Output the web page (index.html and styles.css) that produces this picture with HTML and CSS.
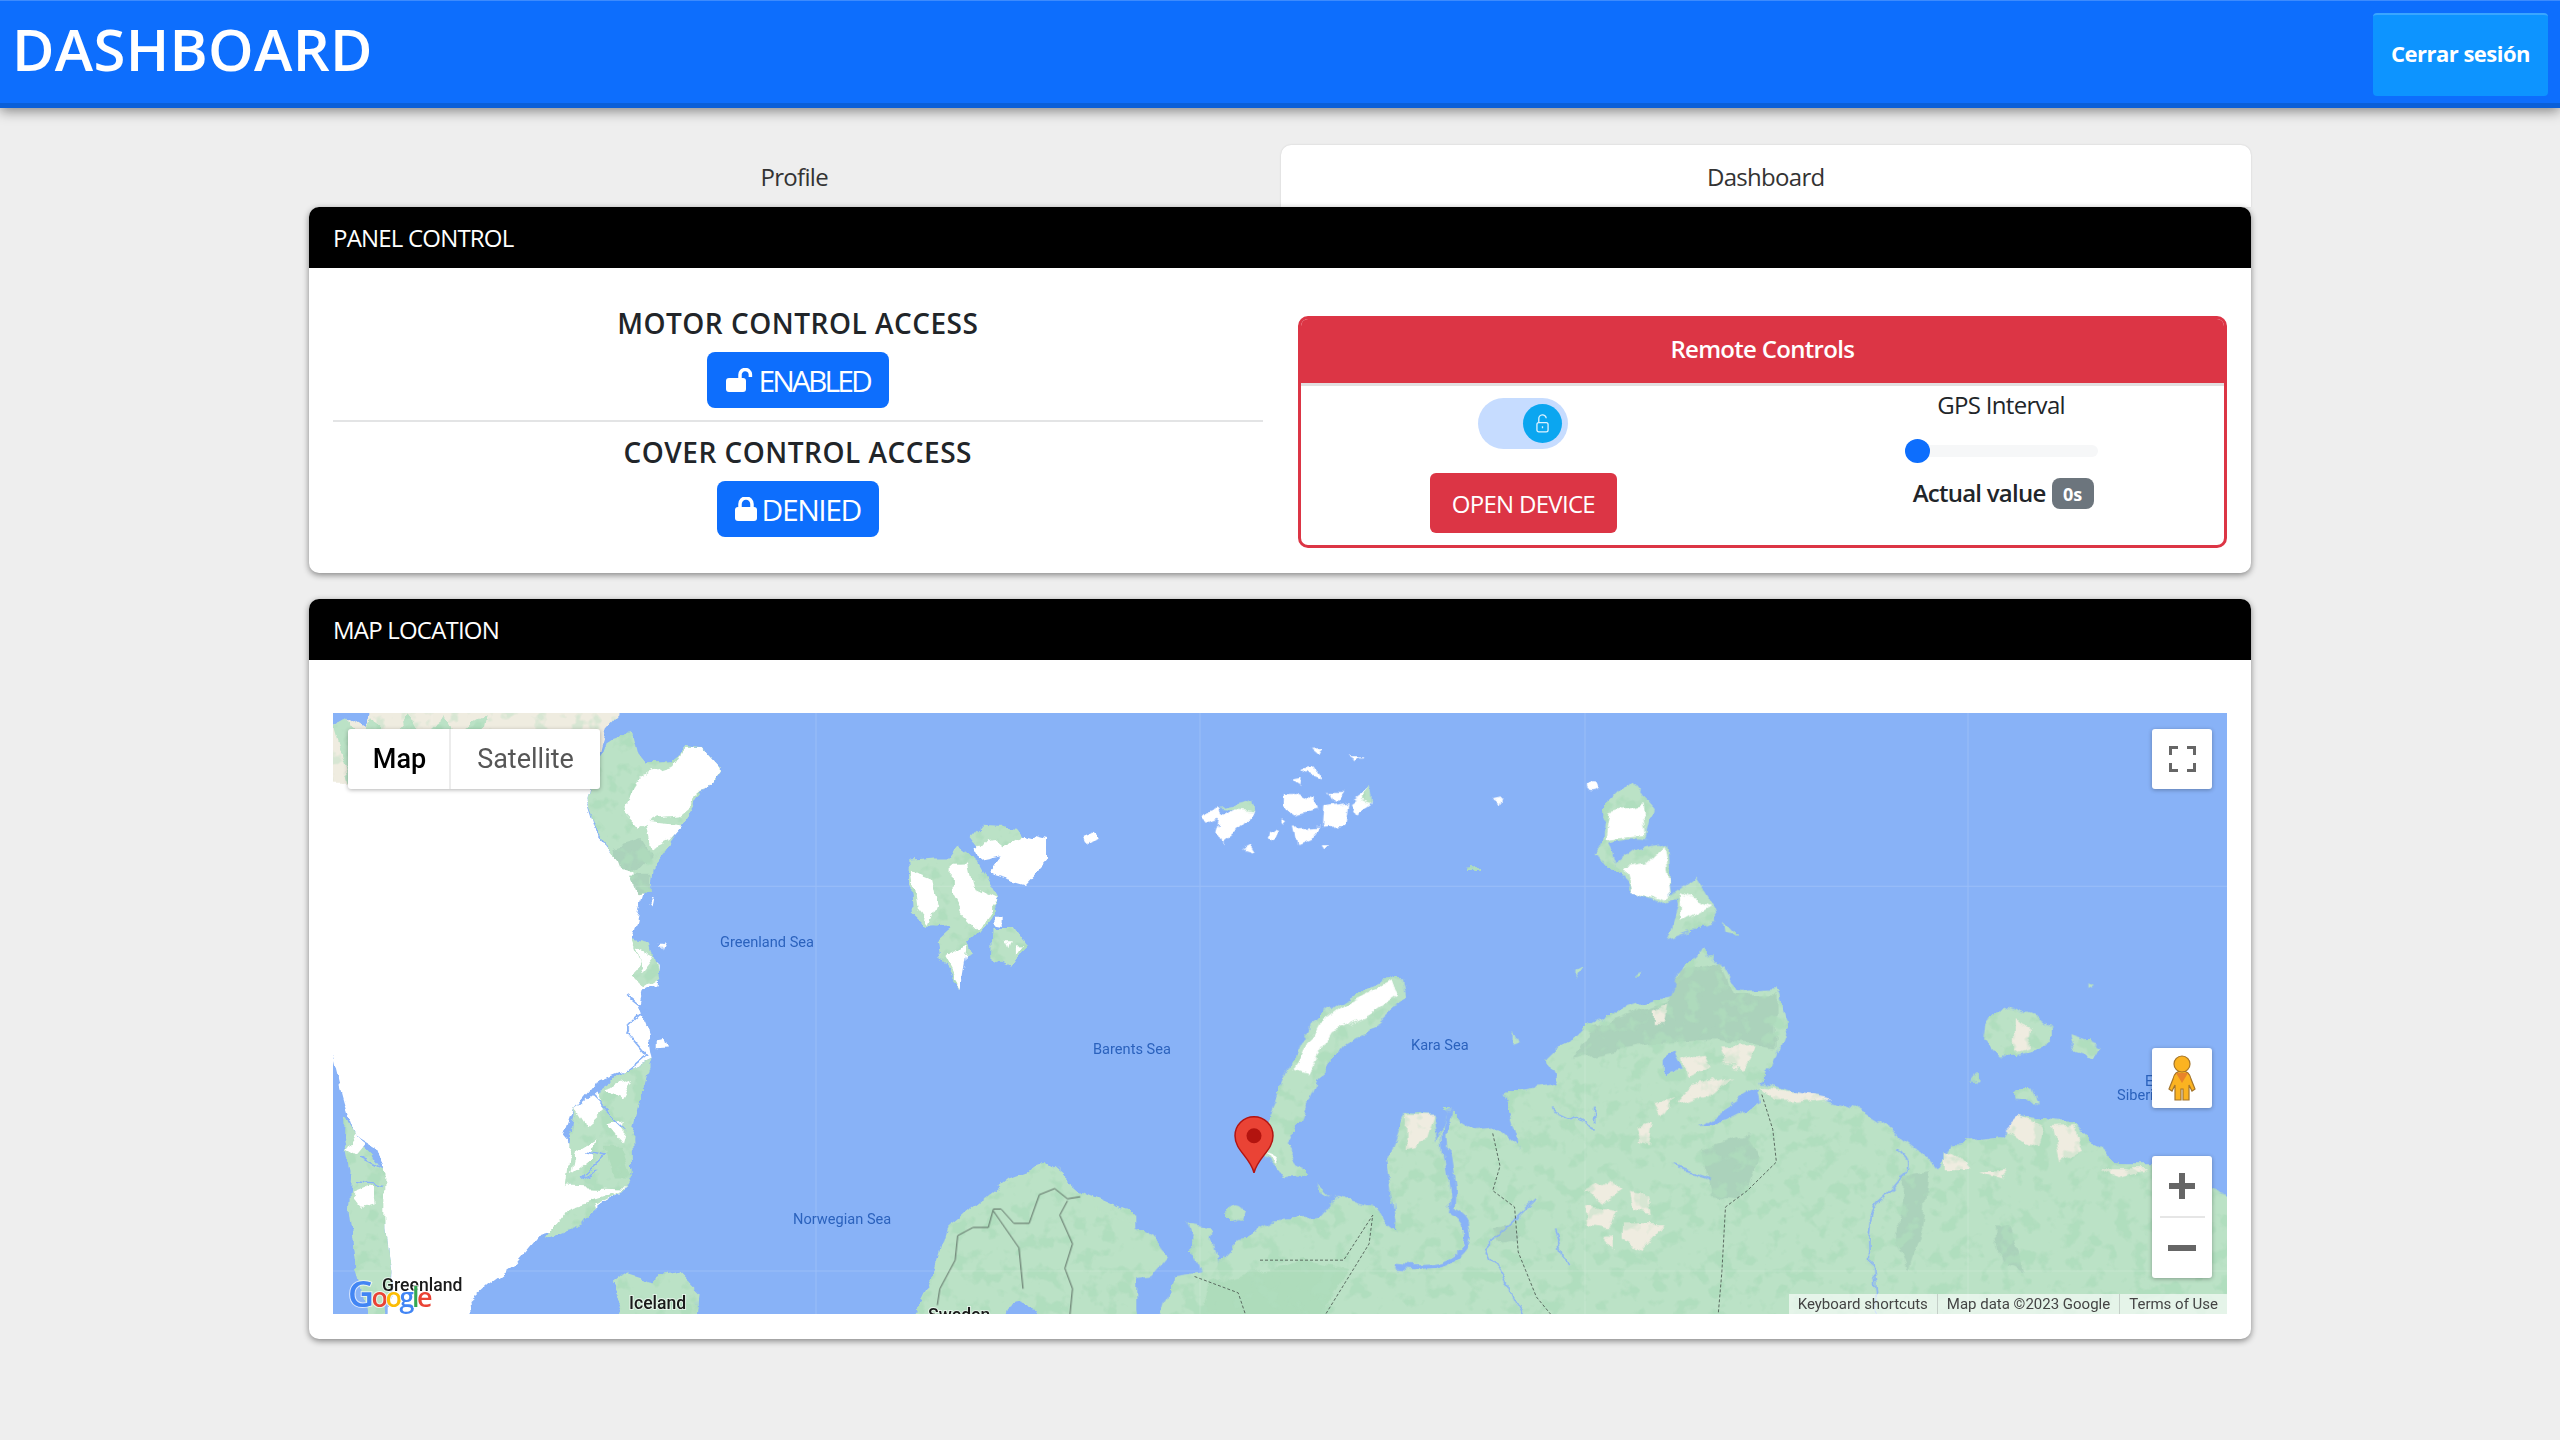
FILE: index.html
```html
<!DOCTYPE html>
<html lang="en">
<head>
<meta charset="utf-8">
<title>Dashboard</title>
<link rel="stylesheet" href="styles.css">
</head>
<body>
<header class="topbar">
  <h1 class="brand">DASHBOARD</h1>
  <button class="logout">Cerrar sesión</button>
</header>
<main class="page">
  <nav class="tabs">
    <a class="tab">Profile</a>
    <a class="tab tab-active">Dashboard</a>
  </nav>
  <section class="card">
    <div class="card-head">PANEL CONTROL</div>
    <div class="panel-body">
      <div class="access">
        <h4 class="access-title">MOTOR CONTROL ACCESS</h4>
        <button class="access-btn">
          <svg class="ico-unlock" viewBox="0 0 28 24"><rect x="0" y="10" width="20" height="14" rx="3" class="ico-fill"/><path d="M14 11V7a5.200 5.200 0 0 1 10.400-.6V9" class="ico-line"/></svg>
          <span>ENABLED</span>
        </button>
        <hr class="rule">
        <h4 class="access-title">COVER CONTROL ACCESS</h4>
        <button class="access-btn access-btn-denied">
          <svg class="ico-lock" viewBox="0 0 22 24"><rect x="0" y="10" width="22" height="14" rx="3" class="ico-fill"/><path d="M5 11V7a6 6 0 0 1 12 0v4" class="ico-line"/></svg>
          <span>DENIED</span>
        </button>
      </div>
      <div class="remote">
        <div class="remote-head">Remote Controls</div>
        <div class="remote-body">
          <div class="remote-left">
            <div class="switch">
              <span class="knob">
                <svg class="knob-ico" viewBox="0 0 14 20"><path d="M3 9V5a4 4 0 0 1 8-.6" class="knob-line"/><rect x="1" y="9" width="12" height="10" rx="2" class="knob-line"/><path d="M7 13v2" class="knob-line"/></svg>
              </span>
            </div>
            <button class="open-btn">OPEN DEVICE</button>
          </div>
          <div class="remote-right">
            <div class="gps-label">GPS Interval</div>
            <div class="slider"><span class="thumb"></span></div>
            <div class="actual"><span>Actual value</span><span class="badge">0s</span></div>
          </div>
        </div>
      </div>
    </div>
  </section>
  <section class="card">
    <div class="card-head">MAP LOCATION</div>
    <div class="map-body">
      <div class="map">
        <svg class="map-svg" viewBox="333 713 1894 600" preserveAspectRatio="none">
          <defs>
            <filter id="terrain" filterUnits="userSpaceOnUse" x="303" y="683" width="1954" height="660" color-interpolation-filters="sRGB">
              <feTurbulence type="fractalNoise" baseFrequency=".045" numOctaves="4" seed="3" result="n"/>
              <feDisplacementMap in="SourceGraphic" in2="n" scale="13" xChannelSelector="R" yChannelSelector="G" result="d"/>
              <feColorMatrix in="d" type="matrix" values="0 0 0 0 .685  0 0 0 0 .865  0 0 0 0 .74  0 8 -8 0 0" result="mask"/>
              <feTurbulence type="fractalNoise" baseFrequency=".06" numOctaves="3" seed="11" result="m"/>
              <feColorMatrix in="m" type="matrix" values="0 0 0 0 0  0 0 0 0 0  0 0 0 0 0  7 0 0 0 -3.700" result="t"/>
              <feComposite in="mask" in2="t" operator="in" result="p"/>
              <feMerge><feMergeNode in="d"/><feMergeNode in="p"/></feMerge>
            </filter>
          </defs>
          <rect x="333" y="713" width="1894" height="600" class="water"/>
          <g filter="url(#terrain)">
          <g transform="translate(320 700) scale(.5102 .4082)">
            <!-- Greenland -->
            <path class="sand" d="M-30 210V60L25 60 55 42 90 70 110 0H585V35L560 70 550 110 530 215Z"/>
            <path class="land" d="M25 60l30-20 20 60 30-60 30 60 40-60 20 50 50-50 20 40 60-40-10 60-60 40-40-30-60 50-40-20-50 90z"/>
            <path class="land" d="M560 100L610 80 620 130 640 160 690 155 710 120 750 125 783 170 750 230 700 320 680 360 655 400 650 460 625 480 590 440 570 370 545 320 520 240Z"/>
            <path class="ice" d="M-30 200V860L25 870C40 950 50 1000 70 1060L110 1090 125 1140 130 1300 140 1400 135 1540H300L295 1470 330 1430 380 1385 430 1310 500 1285 545 1235 600 1195 550 1180 490 1190 500 1100 480 1070 500 1000 540 940 600 910 650 880 640 800 625 750 632 715 660 695 662 650 610 590 625 510 640 450 610 420 570 370 540 320 520 240 530 200Z"/>
            <path class="ice" d="M625 190L690 165 710 125 750 125 783 170 750 230 700 285 660 290 630 310 600 270Z"/>
            <path class="ice" d="M640 300L710 310 685 345 650 365Z"/>
            <path class="tundra" d="M575 360L630 340 650 380 620 420 590 410Z"/>
            <path class="tundra" d="M610 430L650 430 648 470 625 475Z"/>
            <path class="land" d="M480 1190L500 1000 600 910 650 880 630 960 610 1060 612 1170 600 1195Z"/>
            <path class="ice" d="M500 1000L540 960 555 1000 520 1040ZM500 1100L540 1070 530 1120 490 1160ZM565 1040L600 1030 590 1080ZM560 950L610 930 590 975Z"/>
            <path class="forest" d="M560 1090L590 1090 612 1170 578 1170Z"/>
            <path class="waterline" d="M530 965L600 1050M520 1100L560 1110 510 1170 545 1150M600 720L640 760 600 810 640 870 600 910"/>
            <path class="land" d="M610 590L650 600 665 680 640 700 610 680 625 640Z"/>
            <path class="ice" d="M620 610L655 630 630 670Z"/>
            <path class="land" d="M45 1010L80 1080 130 1160 130 1300 140 1400 125 1540H100L70 1380 55 1240 60 1150 45 1070Z"/>
            <path class="ice" d="M60 1210L100 1190 105 1230 80 1240ZM70 1060L90 1080 70 1110 50 1095Z"/>
            <path class="waterline" d="M80 1120L125 1150M70 1180L125 1190"/>
            <path class="land" d="M490 1240L600 1195 540 1235 510 1285 440 1320Z"/>
            <path class="ice" d="M660 825L675 822 682 850 660 852ZM645 500L655 480 650 510ZM670 600L678 592 672 615Z"/>
            <path class="land" d="M570 1430L600 1400 650 1420 700 1400 740 1450 735 1540H575L590 1470Z"/>
            <!-- Svalbard -->
            <path class="land" d="M1155 390L1200 385 1235 385 1250 360 1290 400 1330 490 1310 540 1290 570 1270 590 1280 620 1240 640 1255 710 1210 630 1205 590 1240 550 1190 555 1160 520Z"/>
            <path class="ice" d="M1160 420L1200 440 1210 500 1195 550 1170 510Z"/>
            <path class="ice" d="M1240 400L1270 400 1280 460 1330 490 1290 560 1260 520 1240 470Z"/>
            <path class="ice" d="M1220 630L1270 600 1255 710Z"/>
            <path class="land" d="M1275 340L1300 305 1360 310 1380 340 1350 360 1300 380Z"/>
            <path class="ice" d="M1285 365L1310 330 1340 360 1380 330 1425 345 1425 390 1380 450 1310 425 1340 380 1290 392Z"/>
            <path class="land" d="M1320 560L1360 560 1380 600 1355 650 1320 630Z"/>
            <path class="ice" d="M1340 590L1350 590 1345 610ZM1360 600L1375 600 1360 625Z"/>
            <path class="ice" d="M1320 530L1340 530 1340 555 1320 550Z"/>
            <path class="ice" d="M1500 335L1525 322 1530 340 1505 352Z"/>
            <!-- Fennoscandia -->
            <path class="land" d="M1150 1540L1195 1430 1210 1370 1230 1290 1290 1230 1350 1170 1430 1135 1490 1200 1600 1260V1540Z"/>
            <path class="water" d="M1340 1540C1350 1450 1380 1430 1425 1540Z"/>
          </g>
          <g transform="translate(1100 700) scale(.7273 .4082)">
            <!-- Mainland -->
            <path class="land" d="M-10 1240L30 1270 75 1320 95 1360 70 1410 20 1420 10 1540H-10Z"/>
            <path class="land" d="M80 1540L100 1415 140 1405 125 1295 150 1300 160 1375 190 1320 240 1270 300 1265 325 1215 370 1240 410 1300 395 1130 420 1010 460 1015 465 1090 475 1000 520 1050 545 1045 580 1100 555 960 630 940 615 880 650 820 700 770 770 730 800 720 795 670 830 610 860 660 875 710 930 705 945 790 930 870 905 935 960 960 1040 1000 1085 1050 1130 1110 1150 1150 1170 1085 1240 1070 1265 1015 1340 1040 1400 1140 1450 1140 1600 1250V1540Z"/>
            <path class="tundra" d="M800 660L850 640 870 720 930 720 930 850 850 830 760 840 650 880 680 800 780 740Z"/>
            <path class="tundra" d="M830 1100L890 1060 910 1120 880 1220 840 1210Z"/>
            <path class="tundra" d="M1105 1160L1140 1150 1130 1290 1110 1400 1095 1330ZM1230 1290L1250 1290 1270 1400 1240 1380ZM540 1290L570 1280 575 1320 545 1330Z"/>
            <path class="forest" d="M130 1540L150 1430 210 1400 280 1370 340 1390 320 1450 300 1540Z"/>
            <path class="sand" d="M800 880L830 865 840 900 805 930ZM850 850L900 850 885 900 860 890ZM810 950L870 920 840 965 790 990ZM765 990L790 975 775 1015ZM760 760L780 745 775 790 760 790Z"/>
            <path class="sand" d="M665 1200L700 1170 720 1195 690 1230ZM730 1200L755 1210 760 1260 735 1250ZM670 1240L710 1250 700 1290 670 1280ZM720 1280L775 1280 745 1340 720 1320ZM690 1310L705 1310 705 1340Z"/>
            <path class="sand" d="M905 945L960 960 1005 975 960 985 930 985ZM420 1015L460 1015 450 1075 420 1095ZM1245 1050L1265 1015 1300 1040 1290 1090 1270 1080ZM1310 1050L1340 1045 1350 1100 1320 1130ZM1160 1100L1180 1120 1195 1150 1160 1150ZM1210 1150L1250 1150 1240 1170ZM1380 1150L1440 1150 1400 1170ZM735 1050L760 1030 755 1090 740 1080Z"/>
            <path class="water" d="M825 1040L905 950 910 985 860 1030ZM775 880L790 860 800 900 775 915Z"/>
            <path class="waterbig" d="M478 1005C465 1100 490 1180 482 1250C500 1260 512 1285 504 1330C490 1385 450 1395 405 1385"/>
            <path class="waterline" d="M1100 1100C1130 1130 1090 1200 1070 1230C1050 1280 1060 1400 1070 1503M600 1220L530 1340 580 1503M790 1140L840 1170M620 1000L680 1050M625 1300L640 1380M680 990L680 1030"/>
            <path class="land" d="M300 1180L320 1215 305 1200ZM120 1285L155 1295 150 1330 130 1330Z"/>
            <ellipse class="land" cx="187" cy="1253" rx="12" ry="22"/>
            <!-- Novaya Zemlya -->
            <path class="land" d="M225 1040L255 920 290 790 330 740 385 690 415 680 420 730 385 790 335 840 300 930 280 1010 255 1090 285 1160 250 1165 225 1110Z"/>
            <path class="ice" d="M265 910L300 790 330 750 400 690 410 720 370 770 320 810 285 920Z"/>
            <path class="ice" d="M230 1110L245 1120 240 1135Z"/>
            <!-- Franz Josef Land -->
            <path class="ice" d="M290 120L305 118 300 135ZM342 140L358 140 352 152ZM280 165L295 160 305 190 290 180ZM265 195L280 190 278 210ZM250 225L270 225 295 245 300 270 270 285 250 260ZM315 225L332 225 322 250ZM310 260L340 250 336 305 308 310ZM345 250L372 215 378 250 355 280ZM140 285L165 265 172 285 150 300ZM165 290L190 265 215 275 190 320 170 350 160 320ZM230 320L245 325 240 345 228 335ZM265 310L305 305 290 340 270 355ZM195 360L212 370 205 350ZM305 355L315 355 308 368ZM245 290L255 295 250 305ZM285 235L295 240 290 250Z"/>
            <path class="land" d="M165 265L210 245 215 275 185 270ZM360 240L375 210 378 250Z"/>
            <!-- Severnaya Zemlya -->
            <path class="land" d="M730 198L760 265 750 340 780 360 785 480 820 435 845 510 850 540 780 585 800 480 770 500 730 475 715 420 680 380 690 350 695 260Z"/>
            <path class="ice" d="M700 270L745 250 750 330 695 340Z"/>
            <path class="ice" d="M720 410L750 400 775 360 785 480 770 495 730 475Z"/>
            <path class="ice" d="M800 470L840 500 800 540Z"/>
            <path class="water" d="M700 350C720 335 750 335 770 350L735 365 710 400Z"/>
            <ellipse class="ice" cx="677" cy="217" rx="9" ry="11"/>
            <path class="ice" d="M540 245L552 240 548 258Z"/>
            <path class="land" d="M505 405L520 420 510 420ZM858 540L875 575 860 570ZM655 660L665 650 655 680ZM735 665L742 660 735 680ZM570 810L577 840 570 845Z"/>
            <!-- New Siberian -->
            <path class="land" d="M1220 790L1240 750 1280 775 1310 800 1310 840 1240 875 1218 830Z"/>
            <path class="sand" d="M1255 780L1280 800 1275 850 1255 860Z"/>
            <path class="land" d="M1330 815L1380 845 1365 870 1335 850ZM1255 960L1285 945 1292 985 1255 980ZM1205 910L1208 935 1200 925ZM1355 700L1362 705 1355 712Z"/>
          </g>
          </g>
          <g transform="translate(320 700) scale(.5102 .4082)">
            <path class="border" d="M1210 1480L1215 1440 1245 1370 1250 1310 1280 1290 1310 1290 1320 1245 1335 1245 1360 1280 1390 1280 1410 1210 1440 1195 1465 1220 1490 1215M1320 1250L1370 1340 1378 1440M1465 1225L1450 1260 1475 1330 1460 1390 1475 1440 1470 1503"/>
          </g>
          <g transform="translate(1100 700) scale(.7273 .4082)">
            <path class="border dotted" d="M540 1060L550 1140 540 1200 570 1240 575 1350 600 1460 620 1503M910 965L925 1050 930 1130 890 1200 860 1240 855 1400 850 1503M220 1370H335L375 1260 370 1330 310 1503M130 1410L190 1450 200 1503"/>
          </g>
          <g class="grid">
            <path d="M333 886H2227M333 1270H2227M432 713V1313M816 713V1313M1200 713V1313M1585 713V1313M1968 713V1313"/>
          </g>
          <text x="720" y="947" class="sea">Greenland Sea</text>
          <text x="1093" y="1053" class="sea">Barents Sea</text>
          <text x="1411" y="1049" class="sea">Kara Sea</text>
          <text x="793" y="1223" class="sea">Norwegian Sea</text>
          <text x="2145" y="1085" class="sea">E</text>
          <text x="2117" y="1099" class="sea">Siberi</text>
          <text x="382" y="1290" class="place">Greenland</text>
          <text x="629" y="1308" class="place">Iceland</text>
          <text x="928" y="1320" class="place">Sweden</text>
          <text x="348" y="1306" class="glogo"><tspan class="g-blue g-big">G</tspan><tspan class="g-red">o</tspan><tspan class="g-yellow">o</tspan><tspan class="g-blue">g</tspan><tspan class="g-green">l</tspan><tspan class="g-red">e</tspan></text>
          <path class="pin" d="M1254 1172C1250 1156 1235 1150 1235 1135a19 19 0 0 1 38 0C1273 1150 1258 1156 1254 1172Z"/>
          <circle class="pin-dot" cx="1254" cy="1135" r="7.5"/>
        </svg>
        <div class="map-types">
          <span class="mt mt-on">Map</span><span class="mt">Satellite</span>
        </div>
        <div class="ctl ctl-full">
          <svg class="ctl-ico" viewBox="0 0 27 26"><path class="full-line" d="M1.500 9V1.500H9M18 1.500H25.500V9M25.500 17V24.500H18M9 24.500H1.500V17"/></svg>
        </div>
        <div class="ctl ctl-peg">
          <svg class="peg" viewBox="0 0 28 46">
            <path class="peg-body" d="M14 16C8 16 6 19 5 24L1 34 4 36 7 30V45H13V34H15V45H21V30L24 36 27 34 23 24C22 19 20 16 14 16Z"/>
            <circle class="peg-body" cx="14" cy="9" r="8"/>
            <path class="peg-v" d="M8 18L14 28 20 18Z"/>
          </svg>
        </div>
        <div class="ctl ctl-zoom">
          <span class="zoom-cell"><span class="plus"></span></span>
          <span class="zoom-div"></span>
          <span class="zoom-cell"><span class="minus"></span></span>
        </div>
        <div class="attrib">
          <span class="at at-key">Keyboard shortcuts</span><span class="at at-data">Map data ©2023 Google</span><span class="at at-terms">Terms of Use</span>
        </div>
      </div>
    </div>
  </section>
</main>
</body>
</html>
```
FILE: styles.css
```css
* { box-sizing: border-box; }
html, body { margin: 0; height: 100%; }
body {
  min-height: 1440px;
  background: #eee;
  color: #212529;
  font-family: "Open Sans", "Noto Sans", sans-serif;
  overflow: hidden;
}
button { font-family: inherit; border: 0; }

.topbar {
  height: 108px;
  display: flex;
  align-items: flex-start;
  justify-content: space-between;
  background: #0d6efd;
  border-top: 1px solid #3d8bfd;
  border-bottom: 5px solid #0a5fd8;
  box-shadow: 0 3px 12px rgba(0, 0, 0, .45);
  padding: 12px 12px 0 12px;
  position: relative;
}
.brand {
  margin: -2px 0 0;
  color: #fff;
  font-size: 58px;
  line-height: 76px;
  font-weight: 600;
  letter-spacing: .3px;
}
.logout {
  width: 175px;
  height: 83px;
  padding: 0 0 6px;
  background: #0d94ff;
  border-top: 2px solid #3aa6ff;
  border-radius: 4px;
  color: #fff;
  font-size: 22px;
  font-weight: 700;
  letter-spacing: -.5px;
}

.page {
  width: 1942px;
  margin: 37px auto 0;
}
.tabs { display: flex; height: 62px; }
.tab {
  flex: 1;
  display: flex;
  align-items: center;
  justify-content: center;
  font-size: 24px;
  letter-spacing: -.7px;
  color: #333;
}
.tab-active {
  background: #fff;
  border-radius: 10px 10px 0 0;
  box-shadow: 0 0 2px rgba(0, 0, 0, .15);
  margin-left: 1px;
}
.card {
  position: relative;
  background: #fff;
  border-radius: 10px;
  box-shadow: 0 2px 6px rgba(0, 0, 0, .45);
  margin-bottom: 26px;
}
.card-head {
  height: 61px;
  padding: 0 24px;
  display: flex;
  align-items: center;
  background: #000;
  color: #fff;
  font-size: 24px;
  letter-spacing: -.8px;
  border-radius: 10px 10px 0 0;
}

.panel-body {
  display: grid;
  grid-template-columns: 1fr 1fr;
  column-gap: 35px;
  padding: 24px 24px 25px;
}
.access {
  display: flex;
  flex-direction: column;
  align-items: center;
  padding-top: 13px;
}
.access-title {
  margin: 0;
  font-size: 28px;
  line-height: 36px;
  font-weight: 600;
  letter-spacing: .5px;
}
.access-btn {
  display: flex;
  align-items: center;
  gap: 5px;
  height: 56px;
  padding: 0 19px;
  margin-top: 11px;
  background: #0d6efd;
  color: #fff;
  border-radius: 8px;
  font-size: 30px;
  letter-spacing: -2.9px;
}
.access-btn-denied { letter-spacing: -1.4px; padding: 0 18px; }
.ico-unlock { width: 28px; height: 24px; }
.ico-lock { width: 22px; height: 24px; }
.ico-fill { fill: #fff; }
.ico-line { fill: none; stroke: #fff; stroke-width: 3.5; }
.rule {
  width: 100%;
  margin: 12px 0;
  border: 0;
  border-top: 2px solid #e3e4e5;
}
.remote {
  margin-top: 24px;
  border: 3px solid #dc3545;
  border-radius: 10px;
  overflow: hidden;
}
.remote-head {
  height: 64px;
  padding-bottom: 6px;
  background: #dc3545;
  color: #fff;
  display: flex;
  align-items: center;
  justify-content: center;
  font-size: 24px;
  font-weight: 600;
  letter-spacing: -.7px;
}
.remote-body {
  display: grid;
  grid-template-columns: 1fr 1fr;
  column-gap: 32px;
  border-top: 3px solid #e2dfe0;
  height: 162px;
}
.remote-left {
  display: flex;
  flex-direction: column;
  align-items: center;
  padding-top: 12px;
}
.switch {
  width: 90px;
  height: 51px;
  border-radius: 26px;
  background: #c6dcff;
  display: flex;
  align-items: center;
  justify-content: flex-end;
  padding-right: 6px;
}
.knob {
  width: 39px;
  height: 39px;
  border-radius: 50%;
  background: #0ba6f0;
  display: flex;
  align-items: center;
  justify-content: center;
}
.knob-ico { width: 13px; height: 19px; }
.knob-line { fill: none; stroke: #dff3ff; stroke-width: 1.4; }
.open-btn {
  width: 187px;
  height: 60px;
  margin-top: 24px;
  background: #dc3545;
  color: #fff;
  border-radius: 6px;
  font-size: 24px;
  letter-spacing: -.7px;
}
.remote-right {
  display: flex;
  flex-direction: column;
  align-items: center;
}
.gps-label {
  margin-top: 3px;
  font-size: 24px;
  line-height: 32px;
  letter-spacing: -.7px;
}
.slider {
  width: 193px;
  height: 12px;
  margin-top: 24px;
  background: #f6f7f8;
  border-radius: 6px;
  position: relative;
}
.thumb {
  position: absolute;
  left: 0;
  top: -6px;
  width: 25px;
  height: 24px;
  border-radius: 50%;
  background: #0d6efd;
}
.actual {
  display: flex;
  align-items: center;
  gap: 6px;
  margin: 19px 0 0 4px;
  font-size: 24px;
  font-weight: 600;
  letter-spacing: -.75px;
  color: #212529;
}
.badge {
  width: 42px;
  height: 31px;
  margin-top: 2px;
  display: flex;
  align-items: center;
  justify-content: center;
  background: #6c757d;
  color: #fff;
  border-radius: 8px;
  font-size: 18px;
  font-weight: 700;
  letter-spacing: 0;
}

.map-body { padding: 53px 24px 25px; }
.map {
  position: relative;
  width: 1894px;
  height: 601px;
  overflow: hidden;
  background: #88b2f7;
}
.map-svg { display: block; width: 100%; height: 100%; }
.water { fill: #88b2f7; }
.land { fill: #bbe2c6; }
.forest { fill: #aedcbb; }
.tundra { fill: #abd2bb; }
.sand { fill: #efece0; }
.ice { fill: #fff; }
.waterline, .waterbig { fill: none; stroke: #88b2f7; vector-effect: non-scaling-stroke; }
.waterline { stroke-width: 1.6; }
.waterbig { stroke-width: 5; }
.border { fill: none; stroke: #5a6a60; stroke-width: 1; vector-effect: non-scaling-stroke; }
.dotted { stroke-dasharray: 3 2; }
.grid path { fill: none; stroke: rgba(255, 255, 255, .16); stroke-width: 1; }
.sea { font-family: Roboto, sans-serif; font-size: 14.6px; fill: #2b62bd; }
.place { font-family: Roboto, sans-serif; font-size: 17.6px; font-weight: 500; fill: #1a1a1a; stroke: rgba(255, 255, 255, .6); stroke-width: 2px; paint-order: stroke; }
.glogo { font-family: "Open Sans", sans-serif; font-size: 27px; font-weight: 600; letter-spacing: -2.5px; stroke: rgba(255, 255, 255, .7); stroke-width: 2px; paint-order: stroke; }
.g-big { font-size: 36px; }
.g-blue { fill: #4285f4; }
.g-red { fill: #ea4335; }
.g-yellow { fill: #fbbc05; }
.g-green { fill: #34a853; }
.pin { fill: #ea4335; stroke: #b31412; stroke-width: 1.5; }
.pin-dot { fill: #b3140f; }

.map-types {
  position: absolute;
  left: 15px;
  top: 16px;
  display: flex;
  height: 60px;
  background: #fff;
  border-radius: 3px;
  box-shadow: 0 1px 4px rgba(0, 0, 0, .3);
}
.mt {
  display: flex;
  align-items: center;
  justify-content: center;
  width: 149px;
  font-family: Roboto, sans-serif;
  font-size: 27px;
  color: #565656;
}
.mt-on {
  width: 103px;
  padding-left: 2px;
  color: #000;
  font-weight: 500;
  border-right: 2px solid #ececec;
}
.ctl {
  position: absolute;
  left: 1819px;
  width: 60px;
  background: #fff;
  border-radius: 3px;
  box-shadow: 0 1px 4px rgba(0, 0, 0, .3);
  display: flex;
  flex-direction: column;
  align-items: center;
  justify-content: center;
}
.ctl-full { top: 16px; height: 60px; }
.ctl-peg { top: 335px; height: 60px; }
.ctl-zoom { top: 443px; height: 122px; }
.ctl-ico { width: 27px; height: 26px; }
.full-line { fill: none; stroke: #666; stroke-width: 3; }
.peg { width: 28px; height: 46px; }
.peg-body { fill: #fbb321; stroke: #a4742a; stroke-width: 1.2; }
.peg-v { fill: #e8842a; }
.zoom-cell {
  flex: 1;
  width: 100%;
  display: flex;
  align-items: center;
  justify-content: center;
  position: relative;
}
.zoom-div { width: 45px; height: 2px; background: #e6e6e6; }
.plus { width: 26px; height: 26px; background: linear-gradient(#666, #666) center / 26px 6px no-repeat, linear-gradient(#666, #666) center / 6px 26px no-repeat; }
.minus { width: 28px; height: 6px; background: #666; }
.attrib {
  position: absolute;
  right: 0;
  bottom: 0;
  height: 20px;
  display: flex;
  background: rgba(255, 255, 255, .62);
  font-family: Roboto, sans-serif;
  font-size: 15px;
  line-height: 20px;
  color: #444;
}
.at { padding: 0 9px; border-left: 1px solid #c4cfc8; white-space: nowrap; }
.at-key { border-left: 0; }
```
